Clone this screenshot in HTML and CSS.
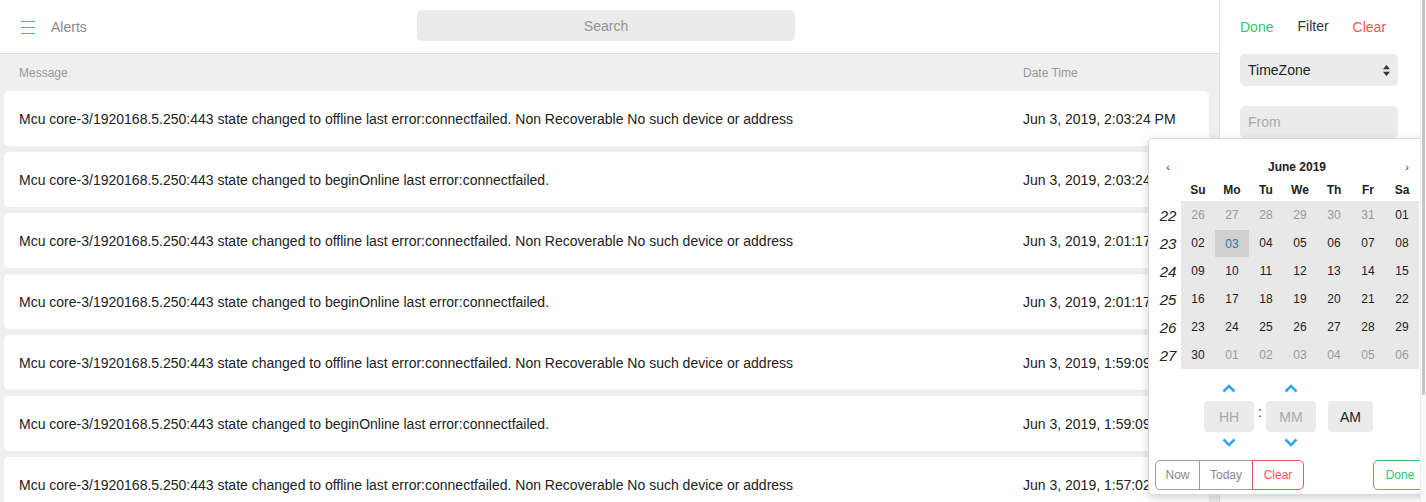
FILE: index.html
```html
<!DOCTYPE html>
<html>
<head>
<meta charset="utf-8">
<link rel="stylesheet" href="styles.css">
</head>
<body>
<div class="app">
  <div class="main">
    <header class="topbar">
      <div class="brand">
        <span class="burger"><i></i><i></i><i></i></span>
        <span class="title">Alerts</span>
      </div>
      <div class="search">Search</div>
      <div></div>
    </header>
    <div class="table">
      <div class="thead">
        <span>Message</span>
        <span>Date Time</span>
      </div>
      <div class="rows">
        <div class="row"><span>Mcu core-3/1920168.5.250:443 state changed to offline last error:connectfailed. Non Recoverable No such device or address</span><span>Jun 3, 2019, 2:03:24 PM</span></div>
        <div class="row"><span>Mcu core-3/1920168.5.250:443 state changed to beginOnline last error:connectfailed.</span><span>Jun 3, 2019, 2:03:24 PM</span></div>
        <div class="row"><span>Mcu core-3/1920168.5.250:443 state changed to offline last error:connectfailed. Non Recoverable No such device or address</span><span>Jun 3, 2019, 2:01:17 PM</span></div>
        <div class="row"><span>Mcu core-3/1920168.5.250:443 state changed to beginOnline last error:connectfailed.</span><span>Jun 3, 2019, 2:01:17 PM</span></div>
        <div class="row"><span>Mcu core-3/1920168.5.250:443 state changed to offline last error:connectfailed. Non Recoverable No such device or address</span><span>Jun 3, 2019, 1:59:09 PM</span></div>
        <div class="row"><span>Mcu core-3/1920168.5.250:443 state changed to beginOnline last error:connectfailed.</span><span>Jun 3, 2019, 1:59:09 PM</span></div>
        <div class="row"><span>Mcu core-3/1920168.5.250:443 state changed to offline last error:connectfailed. Non Recoverable No such device or address</span><span>Jun 3, 2019, 1:57:02 PM</span></div>
      </div>
    </div>
  </div>
  <aside class="sidebar">
    <div class="side-head">
      <span class="done">Done</span>
      <span class="filter">Filter</span>
      <span class="clear">Clear</span>
    </div>
    <div class="select">
      <span>TimeZone</span>
      <svg width="7" height="11" viewBox="0 0 7 11"><path d="M3.5 0L7 4.3H0Z M3.5 11L0 6.7H7Z" fill="#333"/></svg>
    </div>
    <div class="input">From</div>
  </aside>

  <div class="picker">
    <div class="cal-head">
      <span class="nav">&#8249;</span>
      <span class="month">June 2019</span>
      <span class="nav next">&#8250;</span>
    </div>
    <div class="cal">
      <div class="dow-row">
        <span></span><span>Su</span><span>Mo</span><span>Tu</span><span>We</span><span>Th</span><span>Fr</span><span>Sa</span>
      </div>
      <div class="week"><span class="wk">22</span><div class="days"><span class="off">26</span><span class="off">27</span><span class="off">28</span><span class="off">29</span><span class="off">30</span><span class="off">31</span><span>01</span></div></div>
      <div class="week"><span class="wk">23</span><div class="days"><span>02</span><span class="sel">03</span><span>04</span><span>05</span><span>06</span><span>07</span><span>08</span></div></div>
      <div class="week"><span class="wk">24</span><div class="days"><span>09</span><span>10</span><span>11</span><span>12</span><span>13</span><span>14</span><span>15</span></div></div>
      <div class="week"><span class="wk">25</span><div class="days"><span>16</span><span>17</span><span>18</span><span>19</span><span>20</span><span>21</span><span>22</span></div></div>
      <div class="week"><span class="wk">26</span><div class="days"><span>23</span><span>24</span><span>25</span><span>26</span><span>27</span><span>28</span><span>29</span></div></div>
      <div class="week"><span class="wk">27</span><div class="days"><span>30</span><span class="off">01</span><span class="off">02</span><span class="off">03</span><span class="off">04</span><span class="off">05</span><span class="off">06</span></div></div>
    </div>
    <div class="time">
      <div class="tcol">
        <svg class="chev" width="14" height="9" viewBox="0 0 14 9"><path d="M1.5 7.5L7 2L12.5 7.5" fill="none" stroke="#35a6e6" stroke-width="2.6"/></svg>
        <div class="tbox ph">HH</div>
        <svg class="chev" width="14" height="9" viewBox="0 0 14 9"><path d="M1.5 1.5L7 7L12.5 1.5" fill="none" stroke="#35a6e6" stroke-width="2.6"/></svg>
      </div>
      <span class="colon">:</span>
      <div class="tcol">
        <svg class="chev" width="14" height="9" viewBox="0 0 14 9"><path d="M1.5 7.5L7 2L12.5 7.5" fill="none" stroke="#35a6e6" stroke-width="2.6"/></svg>
        <div class="tbox ph">MM</div>
        <svg class="chev" width="14" height="9" viewBox="0 0 14 9"><path d="M1.5 1.5L7 7L12.5 1.5" fill="none" stroke="#35a6e6" stroke-width="2.6"/></svg>
      </div>
      <div class="tcol ampm">
        <div class="tbox am">AM</div>
      </div>
    </div>
    <div class="actions">
      <div class="group">
        <span class="btn">Now</span>
        <span class="btn">Today</span>
        <span class="btn red">Clear</span>
      </div>
      <span class="btn green">Done</span>
    </div>
  </div>
</div>
<div class="scrollbar"><div class="thumb"></div></div>
</body>
</html>
```
FILE: styles.css
```css
* { box-sizing: border-box; }
html, body { margin: 0; padding: 0; height: 100%; overflow: hidden; }
body {
  font-family: "Liberation Sans", Arial, Helvetica, sans-serif;
  font-size: 14px;
  color: #222;
  background: #fff;
}
.app {
  position: relative;
  display: flex;
  width: 1420px;
  height: 502px;
  overflow: hidden;
}
.main {
  width: 1220px;
  flex: none;
  border-right: 1px solid #e2e2e2;
  display: flex;
  flex-direction: column;
}
.topbar {
  height: 54px;
  border-bottom: 1px solid #dedede;
  display: grid;
  grid-template-columns: 417px 378px 1fr;
  align-items: center;
  flex: none;
}
.brand {
  display: flex;
  align-items: center;
  padding-left: 21px;
  gap: 16px;
}
.burger {
  width: 14px;
  height: 13px;
  display: flex;
  flex-direction: column;
  justify-content: space-between;
  margin-top: 1px;
}
.burger i {
  display: block;
  height: 1px;
  background: #3fb3ef;
}
.title { color: #8a8a8a; font-size: 14px; }
.search {
  height: 31px;
  margin-top: -2px;
  background: #ebebeb;
  border-radius: 5px;
  color: #939393;
  display: flex;
  align-items: center;
  justify-content: center;
}
.table {
  flex: 1;
  background: #efefef;
  padding: 0 10px 0 4px;
}
.thead {
  height: 37px;
  display: grid;
  grid-template-columns: 1004px 1fr;
  align-items: center;
  padding-left: 15px;
  font-size: 12px;
  color: #999;
}
.rows { display: flex; flex-direction: column; gap: 6px; }
.row {
  height: 55px;
  background: #fff;
  border-radius: 5px;
  display: grid;
  grid-template-columns: 1004px 1fr;
  align-items: center;
  padding-left: 15px;
  color: #222;
  flex: none;
}
.sidebar {
  flex: 1;
  padding: 0 22px 0 20px;
}
.side-head {
  height: 54px;
  display: flex;
  align-items: center;
  gap: 24px;
}
.done { color: #35c36c; }
.filter { color: #333; margin-top: -2px; }
.clear { color: #f2545b; }
.select {
  height: 32px;
  background: #ebebeb;
  border-radius: 5px;
  display: flex;
  align-items: center;
  justify-content: space-between;
  padding: 0 8px 0 8px;
  color: #222;
}
.select svg { display: block; }
.input {
  height: 32px;
  margin-top: 20px;
  background: #ebebeb;
  border-radius: 5px;
  display: flex;
  align-items: center;
  padding-left: 8px;
  color: #aaa;
}
.picker {
  position: absolute;
  left: 1148px;
  top: 138px;
  width: 286px;
  background: #fff;
  border: 1px solid rgba(0,0,0,0.15);
  border-radius: 5px;
  box-shadow: 0 3px 10px rgba(0,0,0,0.18);
  padding: 16px 6px 4px 6px;
  font-size: 12px;
}
.cal-head {
  height: 24px;
  width: 258px;
  display: grid;
  grid-template-columns: 26px 1fr 12px;
  align-items: center;
}
.nav { text-align: center; font-size: 11px; color: #333; }
.month { text-align: center; font-weight: bold; color: #222; padding-left: 12px; }
.dow-row {
  height: 22px;
  display: grid;
  grid-template-columns: 26px repeat(7, 34px);
  align-items: center;
  text-align: center;
  font-weight: bold;
  color: #222;
}
.week {
  display: grid;
  grid-template-columns: 26px 238px;
  height: 28px;
}
.wk {
  font-style: italic;
  font-size: 15px;
  color: #222;
  display: flex;
  align-items: center;
  justify-content: center;
}
.days {
  display: grid;
  grid-template-columns: repeat(7, 34px);
  background: #e8e8e8;
}
.days span {
  display: flex;
  align-items: center;
  justify-content: center;
  color: #222;
}
.days span.off { color: #9a9a9a; }
.days span.sel {
  background: #cfcfcf;
  color: #2c78ad;
  margin: 1px 0 0 0;
}
.time {
  display: flex;
  justify-content: center;
  align-items: flex-start;
  margin-top: 11px;
  width: 264px;
  padding-left: 3px;
}
.tcol {
  display: flex;
  flex-direction: column;
  align-items: center;
}
.chev { display: block; margin: 4px 0; }
.tbox {
  width: 50px;
  height: 31px;
  margin-top: 4px;
  margin-bottom: 2px;
  background: #ebebeb;
  border-radius: 4px;
  display: flex;
  align-items: center;
  justify-content: center;
  font-size: 14px;
}
.tbox.ph { color: #aaa; }
.tbox.am { width: 45px; color: #222; }
.ampm { margin-left: 12px; padding-top: 17px; }
.colon {
  width: 12px;
  text-align: center;
  padding-top: 24px;
  font-size: 14px;
  color: #333;
}
.actions {
  display: flex;
  justify-content: space-between;
  margin-top: 9px;
}
.group { display: flex; }
.btn {
  height: 30px;
  display: flex;
  align-items: center;
  justify-content: center;
  padding: 0 10px;
  border: 1px solid #9d9d9d;
  color: #8a8a8a;
  background: #fff;
}
.group .btn { border-radius: 0; margin-left: -1px; }
.group .btn:first-child { border-radius: 5px 0 0 5px; margin-left: 0; width: 45px; }
.group .btn:nth-child(2) { width: 54px; }
.group .btn.red { border-color: #f2545b; color: #f2545b; border-radius: 0 5px 5px 0; width: 52px; position: relative; }
.btn.green { border-color: #35c36c; color: #35c36c; border-radius: 5px; width: 54px; }
.scrollbar {
  position: fixed;
  top: 0;
  right: 0;
  width: 6px;
  height: 502px;
  background: #fafafa;
  border-left: 1px solid #ececec;
}
.thumb {
  width: 3px;
  height: 395px;
  margin-left: 1px;
  background: #c4c4c4;
  border-radius: 0 0 2px 2px;
}
```
